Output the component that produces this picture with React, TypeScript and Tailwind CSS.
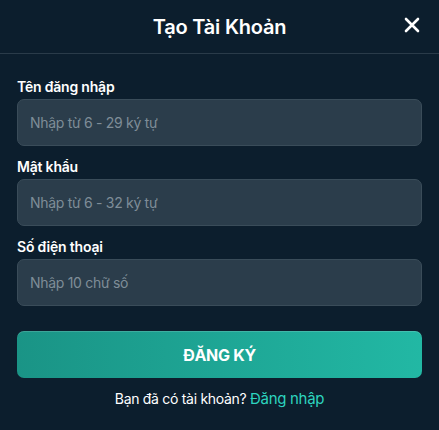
import React from "react";

function Field({ label, placeholder }: { label: string; placeholder: string }) {
  return (
    <div className="flex flex-col">
      <label className="text-[14px] font-semibold text-white leading-[20px] mb-[2px] tracking-[-0.2px]">{label}</label>
      <input
        placeholder={placeholder}
        className="h-[47px] w-full rounded-[7px] bg-[#2b3d4b] border border-[#3a4c59] px-[12px] text-[14px] text-white placeholder:text-[#7f8d98] outline-none tracking-[-0.3px]"
      />
    </div>
  );
}

export default function App() {
  return (
    <div
      className="w-[439px] h-[430px] bg-[#0c1e2d] flex flex-col"
      style={{ fontFamily: "Inter, 'Noto Sans', sans-serif" }}
    >
      <div className="relative h-[54px] flex items-center justify-center border-b border-[#2a3b49]">
        <h1 className="text-[20px] font-semibold text-white tracking-[-0.2px]">Tạo Tài Khoản</h1>
        <button className="absolute right-[19px] top-[17px] w-[16px] h-[16px] flex items-center justify-center">
          <svg width="16" height="16" viewBox="0 0 16 16" fill="none" stroke="white" strokeWidth="2.6" strokeLinecap="round">
            <path d="M2 2 L14 14 M14 2 L2 14" />
          </svg>
        </button>
      </div>
      <div className="flex flex-col px-[17px] pt-[23px] gap-[11px]">
        <Field label="Tên đăng nhập" placeholder="Nhập từ 6 - 29 ký tự" />
        <Field label="Mật khẩu" placeholder="Nhập từ 6 - 32 ký tự" />
        <Field label="Số điện thoại" placeholder="Nhập 10 chữ số" />
      </div>
      <div className="px-[17px] mt-[25px]">
        <button className="w-full h-[47px] rounded-[7px] bg-gradient-to-r from-[#1a9486] to-[#22b8a4] text-[16px] font-bold text-white tracking-[-0.3px] shadow-[inset_0_1px_0_rgba(255,255,255,0.15)]">
          ĐĂNG KÝ
        </button>
      </div>
      <p className="mt-[11px] leading-[20px] text-center text-[14px] text-white tracking-[-0.3px]">
        Bạn đã có tài khoản? <span className="text-[#2dd4bf] text-[15px]">Đăng nhập</span>
      </p>
    </div>
  );
}
